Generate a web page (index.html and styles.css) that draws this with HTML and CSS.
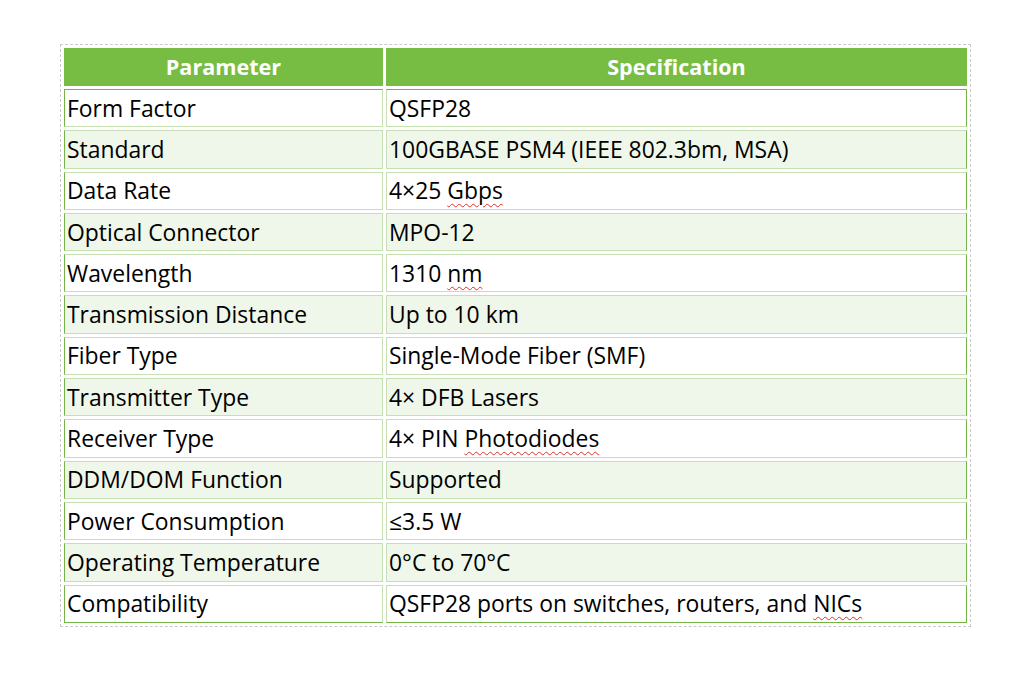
FILE: index.html
```html
<!DOCTYPE html>
<html>
<head>
<meta charset="utf-8">
<link rel="stylesheet" href="styles.css">
</head>
<body>
<table class="spec">
  <colgroup><col class="c1"><col class="c2"></colgroup>
  <thead>
    <tr class="head"><th>Parameter</th><th>Specification</th></tr>
  </thead>
  <tbody>
    <tr><td>Form Factor</td><td>QSFP28</td></tr>
    <tr class="alt"><td>Standard</td><td>100GBASE PSM4 (IEEE 802.3bm, MSA)</td></tr>
    <tr><td>Data Rate</td><td>4×25 <span class="sp">Gbps</span></td></tr>
    <tr class="alt"><td>Optical Connector</td><td>MPO-12</td></tr>
    <tr><td>Wavelength</td><td>1310 <span class="sp">nm</span></td></tr>
    <tr class="alt"><td>Transmission Distance</td><td>Up to 10 km</td></tr>
    <tr><td>Fiber Type</td><td>Single-Mode Fiber (SMF)</td></tr>
    <tr class="alt"><td>Transmitter Type</td><td>4× DFB Lasers</td></tr>
    <tr><td>Receiver Type</td><td>4× PIN <span class="sp">Photodiodes</span></td></tr>
    <tr class="alt"><td>DDM/DOM Function</td><td>Supported</td></tr>
    <tr><td>Power Consumption</td><td>≤3.5 W</td></tr>
    <tr class="alt"><td>Operating Temperature</td><td>0°C to 70°C</td></tr>
    <tr class="last"><td>Compatibility</td><td>QSFP28 ports on switches, routers, and <span class="sp">NICs</span></td></tr>
  </tbody>
</table>
</body>
</html>
```
FILE: styles.css
```css
html, body {
  margin: 0;
  padding: 0;
  background: #ffffff;
}
body {
  padding: 44px 0 0 60px;
  font-family: "Open Sans", "Noto Sans", sans-serif;
  color: #000000;
}
.spec {
  border-collapse: separate;
  border-spacing: 3px;
  border: 1px dashed #c9c9c9;
  width: 911px;
  table-layout: fixed;
}
.spec .c1 { width: 319px; }
.spec .c2 { width: 581px; }
.spec th {
  background: #77bd43;
  color: #ffffff;
  font-weight: 700;
  font-size: 21.6px;
  text-align: center;
  height: 38px;
  padding: 0;
  box-sizing: border-box;
  line-height: 1;
}
.spec td {
  font-size: 22.9px;
  line-height: 1;
  height: 38.3px;
  box-sizing: border-box;
  padding: 2px 2px 0 2px;
  border: 1px solid #c6e0b4;
  vertical-align: middle;
  white-space: nowrap;
  background: #ffffff;
}
.spec tr.alt td {
  background: #eff7ea;
}
.spec td:first-child {
  border-left-color: #74b447;
}
.spec td:last-child {
  border-right-color: #74b447;
}
.spec tbody tr:first-child td {
  border-top-color: #74b447;
}
.spec tr.last td {
  border-bottom-color: #74b447;
}
.sp {
  text-decoration: underline wavy #e0302a;
  text-decoration-thickness: 1px;
  text-underline-offset: 4px;
}
```
